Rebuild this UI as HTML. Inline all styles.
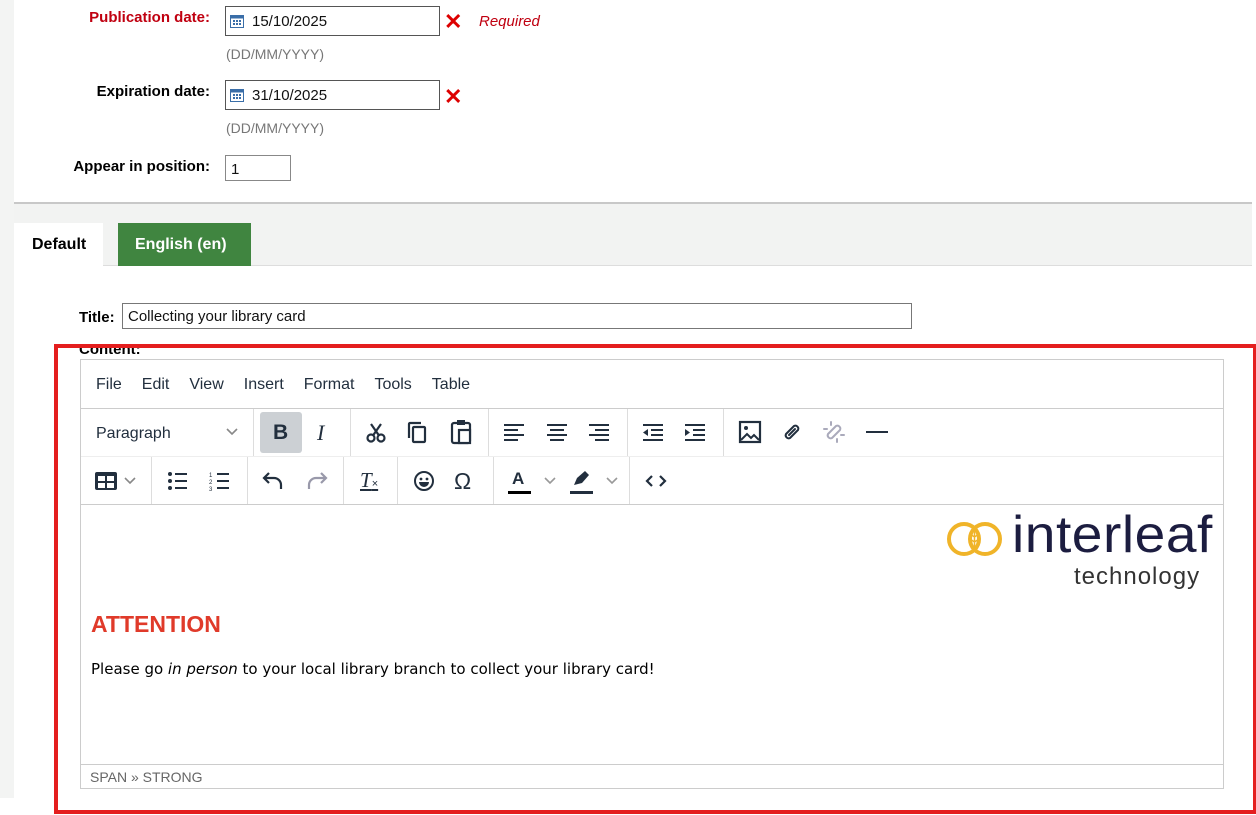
<!DOCTYPE html>
<html><head><meta charset="utf-8"><style>
*{box-sizing:border-box;margin:0;padding:0}
body{width:1256px;height:815px;background:#fff;font-family:"Liberation Sans",sans-serif;position:relative;overflow:hidden}
.a{position:absolute}
.lbl{font-weight:bold;font-size:15px;text-align:right;width:200px;left:10px}
.inp{border:1px solid #555;background:#fff;font-size:15px;padding:6px 5px 0;color:#111}
.hint{color:#777;font-size:14px;left:226px}
.x{color:#d00;font-size:22px;font-weight:bold;left:444px}
.menu span{margin-right:20px;font-size:16px;color:#222f3e}
.sep{position:absolute;top:0;bottom:0;width:1px;background:#ddd}
svg{position:absolute}
</style></head><body>
<div class="a" style="left:0;top:0;width:14px;height:798px;background:#f3f4f3"></div>
<div class="a" style="left:14px;top:202px;width:1238px;height:64px;background:#f2f3f2;border-top:2px solid #c8c8c8;border-bottom:1px solid #ddd"></div>

<div class="a lbl" style="top:9px;color:#c00010">Publication date:</div>
<div class="a inp" style="left:225px;top:6px;width:215px;height:30px;padding-left:26px">15/10/2025</div>
<svg style="left:230px;top:14px" width="14" height="14" viewBox="0 0 14 14"><rect x="0.5" y="1.5" width="13" height="12" fill="#fff" stroke="#3a6ea8"/><rect x="0.5" y="1.5" width="13" height="3" fill="#3a6ea8"/><g fill="#3a6ea8"><rect x="3" y="6" width="2" height="2"/><rect x="6" y="6" width="2" height="2"/><rect x="9" y="6" width="2" height="2"/><rect x="3" y="9" width="2" height="2"/><rect x="6" y="9" width="2" height="2"/><rect x="9" y="9" width="2" height="2"/></g></svg>
<div class="a x" style="top:9px">✕</div>
<div class="a" style="left:479px;top:13px;color:#c00010;font-style:italic;font-size:15px">Required</div>
<div class="a hint" style="top:46px">(DD/MM/YYYY)</div>

<div class="a lbl" style="top:83px">Expiration date:</div>
<div class="a inp" style="left:225px;top:80px;width:215px;height:30px;padding-left:26px">31/10/2025</div>
<svg style="left:230px;top:88px" width="14" height="14" viewBox="0 0 14 14"><rect x="0.5" y="1.5" width="13" height="12" fill="#fff" stroke="#3a6ea8"/><rect x="0.5" y="1.5" width="13" height="3" fill="#3a6ea8"/><g fill="#3a6ea8"><rect x="3" y="6" width="2" height="2"/><rect x="6" y="6" width="2" height="2"/><rect x="9" y="6" width="2" height="2"/><rect x="3" y="9" width="2" height="2"/><rect x="6" y="9" width="2" height="2"/><rect x="9" y="9" width="2" height="2"/></g></svg>
<div class="a x" style="top:84px">✕</div>
<div class="a hint" style="top:120px">(DD/MM/YYYY)</div>

<div class="a lbl" style="top:158px">Appear in position:</div>
<div class="a inp" style="left:225px;top:155px;width:66px;height:26px;border-color:#888;padding-top:5px">1</div>

<div class="a" style="left:14px;top:223px;width:89px;height:44px;background:#fff;font-weight:bold;font-size:16px;padding:13px 0 0 18px">Default</div>
<div class="a" style="left:118px;top:223px;width:133px;height:43px;background:#408540;color:#fff;font-weight:bold;font-size:16px;padding:13px 0 0 17px">English (en)</div>

<div class="a" style="left:79px;top:309px;font-weight:bold;font-size:15px">Title:</div>
<div class="a inp" style="left:122px;top:303px;width:790px;height:26px;border-color:#777;padding-top:4px">Collecting your library card</div>
<div class="a" style="left:79px;top:341px;font-weight:bold;font-size:15px">Content:</div>

<div class="a" style="left:54px;top:344px;width:1202px;height:470px;border:4px solid #e41e1e;border-right-width:3px"></div>
<div class="a" style="left:80px;top:359px;width:1144px;height:430px;border:1px solid #ccc;background:#fff">
  <div class="menu" style="height:49px;padding:16px 0 0 15px;border-bottom:1px solid #ccc"><span>File</span><span>Edit</span><span>View</span><span>Insert</span><span>Format</span><span>Tools</span><span>Table</span></div>
  <div style="position:relative;height:48px;border-bottom:1px solid #eee">
    <div class="a" style="left:15px;top:16px;font-size:16px;color:#222f3e">Paragraph</div>
    <svg style="left:144px;top:18px" width="14" height="10"><path d="M2 2l5 5 5-5" stroke="#888" stroke-width="1.6" fill="none"/></svg>
    <div class="sep" style="left:172px"></div>
    <div class="a" style="left:179px;top:3px;width:42px;height:41px;background:#ccd0d4;border-radius:3px"></div>
    <div class="a" style="left:192px;top:12px;font-size:21px;font-weight:bold;color:#222f3e">B</div>
    <div class="a" style="left:236px;top:11px;font-size:22px;font-style:italic;font-family:'Liberation Serif';color:#222f3e">I</div>
    <div class="sep" style="left:269px"></div>
    <svg style="left:284px;top:13px" width="22" height="22"><circle cx="6" cy="16" r="3.5" stroke="#222f3e" stroke-width="2.2" fill="none"/><circle cx="16" cy="16" r="3.5" stroke="#222f3e" stroke-width="2.2" fill="none"/><path d="M8 13.5L16 2M14 13.5L6 2" stroke="#222f3e" stroke-width="2.2"/></svg>
    <svg style="left:326px;top:12px" width="22" height="24"><rect x="6" y="6" width="12" height="15" rx="1" stroke="#222f3e" stroke-width="2.2" fill="none"/><path d="M2 17V3a1 1 0 011-1h11" stroke="#222f3e" stroke-width="2.2" fill="none"/></svg>
    <svg style="left:369px;top:10px" width="22" height="26"><rect x="2" y="4" width="18" height="20" rx="2" stroke="#222f3e" stroke-width="2.2" fill="none"/><rect x="7" y="1" width="8" height="5" fill="#222f3e"/><rect x="9" y="11" width="11" height="13" stroke="#222f3e" stroke-width="2.2" fill="#fff"/></svg>
    <div class="sep" style="left:407px"></div>
    <svg style="left:423px;top:15px" width="140" height="18"><g fill="#222f3e"><rect x="0" y="0" width="20" height="2"/><rect x="0" y="5" width="14" height="2"/><rect x="0" y="10" width="20" height="2"/><rect x="0" y="15" width="14" height="2"/><rect x="43" y="0" width="20" height="2"/><rect x="46" y="5" width="14" height="2"/><rect x="43" y="10" width="20" height="2"/><rect x="46" y="15" width="14" height="2"/><rect x="85" y="0" width="20" height="2"/><rect x="91" y="5" width="14" height="2"/><rect x="85" y="10" width="20" height="2"/><rect x="91" y="15" width="14" height="2"/></g></svg>
    <div class="sep" style="left:546px"></div>
    <svg style="left:562px;top:15px" width="70" height="18"><g fill="#222f3e"><rect x="0" y="0" width="20" height="2"/><rect x="8" y="5" width="12" height="2"/><rect x="8" y="10" width="12" height="2"/><rect x="0" y="15" width="20" height="2"/><path d="M0 8.5l5-3.5v7z"/><rect x="42" y="0" width="20" height="2"/><rect x="50" y="5" width="12" height="2"/><rect x="50" y="10" width="12" height="2"/><rect x="42" y="15" width="20" height="2"/><path d="M47 8.5l-5-3.5v7z"/></g></svg>
    <div class="sep" style="left:642px"></div>
    <svg style="left:657px;top:11px" width="24" height="24"><rect x="2" y="2" width="20" height="20" stroke="#222f3e" stroke-width="2.2" fill="none"/><circle cx="8" cy="8" r="2" fill="#222f3e"/><path d="M3 20l6-6 4 4 3-3 5 5" stroke="#222f3e" stroke-width="2" fill="none"/></svg>
    <svg style="left:699px;top:11px" width="24" height="24"><path d="M9 15l6-6M10 10l-4 4a3 3 0 004 4l4-4M14 14l4-4a3 3 0 00-4-4l-4 4" stroke="#222f3e" stroke-width="2" fill="none" stroke-linecap="round"/></svg>
    <svg style="left:741px;top:11px" width="24" height="24"><path d="M10 10l-4 4a3 3 0 004 4l4-4M14 14l4-4a3 3 0 00-4-4l-4 4M9 2v3M2 9h3M15 22v-3M22 15h-3" stroke="#aab" stroke-width="2" fill="none" stroke-linecap="round"/></svg>
    <div class="a" style="left:785px;top:22px;width:22px;height:2px;background:#222f3e"></div>
  </div>
  <div style="position:relative;height:48px;border-bottom:1px solid #ccc">
    <svg style="left:13px;top:14px" width="24" height="20"><rect x="1" y="1" width="22" height="18" rx="2" fill="#222f3e"/><g fill="#fff"><rect x="4" y="5" width="7" height="5"/><rect x="13" y="5" width="7" height="5"/><rect x="4" y="12" width="7" height="5"/><rect x="13" y="12" width="7" height="5"/></g></svg>
    <svg style="left:42px;top:19px" width="14" height="10"><path d="M2 2l5 5 5-5" stroke="#888" stroke-width="1.6" fill="none"/></svg>
    <div class="sep" style="left:70px"></div>
    <svg style="left:86px;top:14px" width="22" height="20"><g fill="#222f3e"><circle cx="3" cy="3" r="2"/><circle cx="3" cy="10" r="2"/><circle cx="3" cy="17" r="2"/><rect x="8" y="2" width="12" height="2"/><rect x="8" y="9" width="12" height="2"/><rect x="8" y="16" width="12" height="2"/></g></svg>
    <svg style="left:128px;top:14px" width="22" height="20"><g fill="#222f3e"><text x="0" y="6" font-size="6">1</text><text x="0" y="13" font-size="6">2</text><text x="0" y="20" font-size="6">3</text><rect x="8" y="2" width="12" height="2"/><rect x="8" y="9" width="12" height="2"/><rect x="8" y="16" width="12" height="2"/></g></svg>
    <div class="sep" style="left:166px"></div>
    <svg style="left:180px;top:13px" width="24" height="22"><path d="M8 3L3 8l5 5M3 8h10a7 7 0 017 7v4" stroke="#222f3e" stroke-width="2.2" fill="none"/></svg>
    <svg style="left:224px;top:13px" width="24" height="22"><path d="M16 3l5 5-5 5M21 8H11a7 7 0 00-7 7v4" stroke="#99a" stroke-width="2.2" fill="none"/></svg>
    <div class="sep" style="left:262px"></div>
    <div class="a" style="left:279px;top:11px;font-size:21px;font-style:italic;color:#222f3e;text-decoration:underline;font-family:'Liberation Serif'">T<span style="font-size:11px;font-style:normal;font-family:'Liberation Sans'">×</span></div>
    <div class="sep" style="left:316px"></div>
    <svg style="left:332px;top:13px" width="22" height="22"><circle cx="11" cy="11" r="9" stroke="#222f3e" stroke-width="2" fill="none"/><circle cx="8" cy="9" r="1.4" fill="#222f3e"/><circle cx="14" cy="9" r="1.4" fill="#222f3e"/><path d="M6 12h10a5 5 0 01-10 0z" fill="#222f3e"/></svg>
    <div class="a" style="left:373px;top:11px;font-size:23px;color:#222f3e">Ω</div>
    <div class="sep" style="left:412px"></div>
    <div class="a" style="left:431px;top:12px;font-size:17px;font-weight:bold;color:#222f3e">A</div>
    <div class="a" style="left:427px;top:34px;width:23px;height:3px;background:#000"></div>
    <svg style="left:462px;top:19px" width="14" height="10"><path d="M2 2l5 5 5-5" stroke="#999" stroke-width="1.6" fill="none"/></svg>
    <svg style="left:489px;top:12px" width="24" height="20"><path d="M4 16l3-7 8-7 4 4-7 8z" fill="#222f3e"/></svg>
    <div class="a" style="left:489px;top:34px;width:23px;height:3px;background:#222f3e"></div>
    <svg style="left:524px;top:19px" width="14" height="10"><path d="M2 2l5 5 5-5" stroke="#999" stroke-width="1.6" fill="none"/></svg>
    <div class="sep" style="left:548px"></div>
    <svg style="left:564px;top:17px" width="22" height="14"><path d="M7 2L2 7l5 5M15 2l5 5-5 5" stroke="#222f3e" stroke-width="2.2" fill="none"/></svg>
  </div>
  <div style="position:relative;height:259px">
    <svg style="left:866px;top:12px" width="60" height="46"><circle cx="17" cy="22" r="15" stroke="#f0b429" stroke-width="4" fill="none"/><circle cx="38" cy="22" r="15" stroke="#f0b429" stroke-width="4" fill="none"/><path d="M27.5 10v24M23 17l4.5 3 4.5-3M23 22l4.5 3 4.5-3M23 27l4.5 3 4.5-3" stroke="#f0b429" stroke-width="1.5" fill="none"/></svg>
    <div class="a" style="left:931px;top:0px;font-size:52px;color:#1c1d40;letter-spacing:0.5px;transform:scaleX(1.06);transform-origin:left">interleaf</div>
    <div class="a" style="left:993px;top:58px;font-size:24px;color:#333;letter-spacing:1px">technology</div>
    <div class="a" style="left:10px;top:106px;font-size:23px;font-weight:bold;color:#e03a2a">ATTENTION</div>
    <div class="a" style="left:10px;top:155px;font-family:'Comic Sans MS','DejaVu Sans',sans-serif;color:#000;font-size:15px">Please go <i>in person</i> to your local library branch to collect your library card!</div>
  </div>
  <div style="border-top:1px solid #ccc;height:22px;padding:4px 0 0 9px;font-size:14px;color:#666">SPAN » STRONG</div>
</div>
</body></html>
